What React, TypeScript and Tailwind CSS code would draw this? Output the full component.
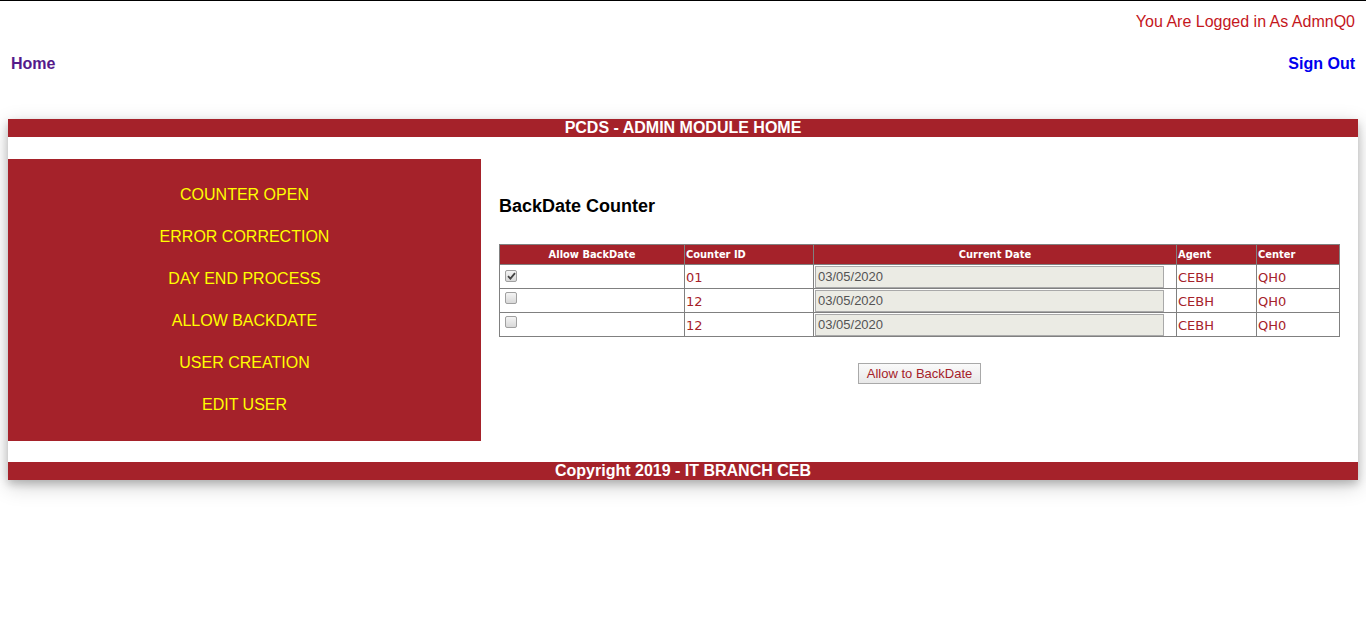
import React from 'react';

const menu = ['COUNTER OPEN', 'ERROR CORRECTION', 'DAY END PROCESS', 'ALLOW BACKDATE', 'USER CREATION', 'EDIT USER'];

const rows = [
  { checked: true, id: '01', date: '03/05/2020', agent: 'CEBH', center: 'QH0' },
  { checked: false, id: '12', date: '03/05/2020', agent: 'CEBH', center: 'QH0' },
  { checked: false, id: '12', date: '03/05/2020', agent: 'CEBH', center: 'QH0' },
];

const Box: React.FC<{ checked: boolean }> = ({ checked }) => (
  <span className="inline-flex h-[12px] w-[12px] items-center justify-center rounded-[2px] border border-[#a0a0a0] bg-gradient-to-b from-[#f4f4f4] to-[#d8d8d8]">
    {checked && (
      <svg width="9" height="8" viewBox="0 0 9 8">
        <path d="M1 4.2 L3.4 6.6 L8 1.2" fill="none" stroke="#444" strokeWidth="1.8" />
      </svg>
    )}
  </span>
);

export default function App() {
  return (
    <div className="min-h-screen border-t border-black bg-white font-['Liberation_Sans',Arial,sans-serif] text-[16px]">
      <div className="px-[11px] pt-[9px] text-right text-[#c4161c]">You Are Logged in As AdmnQ0</div>
      <div className="mt-[18px] flex justify-between px-[11px] font-bold">
        <span className="text-[#551a8b]">Home</span>
        <span className="text-[#0000ee]">Sign Out</span>
      </div>

      <div className="mx-[8px] mt-[43px] bg-white shadow-[0_4px_8px_0_rgba(0,0,0,0.2),0_6px_20px_0_rgba(0,0,0,0.19)]">
        <div className="h-[18px] bg-[#a5222a] text-center text-[16px] font-bold leading-[18px] text-white">
          PCDS - ADMIN MODULE HOME
        </div>

        <div className="flex pt-[22px] pb-[21px]">
          <div className="w-[473px] bg-[#a5222a] pt-[15px] pb-[15px]">
            {menu.map((m) => (
              <div key={m} className="flex h-[42px] items-center justify-center text-[16px] text-[#ffff00]">
                {m}
              </div>
            ))}
          </div>

          <div className="flex-1 px-[18px]">
            <div className="mt-[36px] text-[18px] font-bold leading-[22px] text-black">BackDate Counter</div>

            <table className="mt-[27px] w-full border-collapse font-['DejaVu_Sans',Verdana,sans-serif] text-[#a5222a]">
              <thead>
                <tr className="h-[20px] bg-[#a5222a] font-['DejaVu_Sans_Condensed','DejaVu_Sans',sans-serif] text-[11px] font-bold text-white">
                  <th className="w-[185px] border border-[#808080] pt-[2px] text-center">Allow BackDate</th>
                  <th className="w-[129px] border border-[#808080] px-[1px] pt-[2px] text-left">Counter ID</th>
                  <th className="w-[363px] border border-[#808080] pt-[2px] text-center">Current Date</th>
                  <th className="w-[80px] border border-[#808080] px-[1px] pt-[2px] text-left">Agent</th>
                  <th className="border border-[#808080] px-[1px] pt-[2px] text-left">Center</th>
                </tr>
              </thead>
              <tbody>
                {rows.map((r, i) => (
                  <tr key={i} className="h-[24px] text-[13px]">
                    <td className="border border-[#808080] px-[5px] align-top pt-[1px]">
                      <Box checked={r.checked} />
                    </td>
                    <td className="border border-[#808080] px-[1px] pt-[2px]">{r.id}</td>
                    <td className="border border-[#808080] px-[1px]">
                      <div className="h-[22px] w-[349px] border border-[#a9a9a9] bg-[#ebebe4] px-[2px] font-['Liberation_Sans',Arial,sans-serif] text-[13px] leading-[20px] text-[#545454]">
                        {r.date}
                      </div>
                    </td>
                    <td className="border border-[#808080] px-[1px] pt-[2px]">{r.agent}</td>
                    <td className="border border-[#808080] px-[1px] pt-[2px]">{r.center}</td>
                  </tr>
                ))}
              </tbody>
            </table>

            <div className="mt-[26px] flex justify-center">
              <button className="h-[21px] border border-[#a9a9a9] bg-gradient-to-b from-[#fafafa] to-[#e8e8e8] px-[8px] text-[13px] leading-[19px] text-[#a5222a]">
                Allow to BackDate
              </button>
            </div>
          </div>
        </div>

        <div className="h-[18px] bg-[#a5222a] text-center text-[16px] font-bold leading-[18px] text-white">
          Copyright 2019 - IT BRANCH CEB
        </div>
      </div>
    </div>
  );
}
